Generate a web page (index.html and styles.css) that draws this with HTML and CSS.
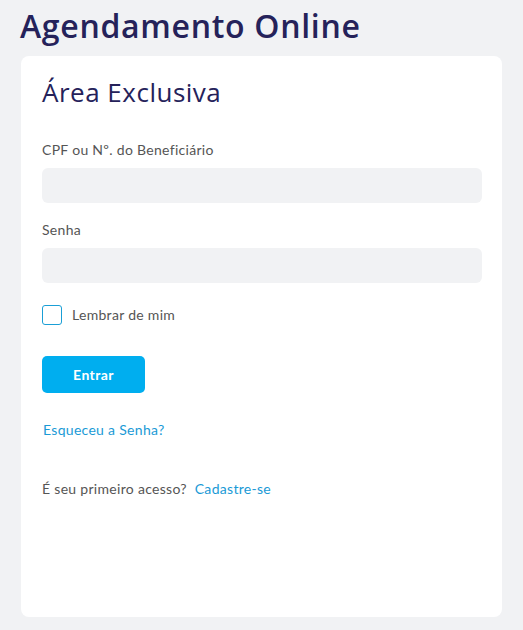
FILE: index.html
```html
<!DOCTYPE html>
<html>

<head>
    <title>Agendamento Online</title>
    <meta charset="UTF-8">
    <link rel="stylesheet" href="styles.css">
</head>

<body>
    <div class="page">
        <h1>Agendamento Online</h1>
        <div class="card">
            <h2>Área Exclusiva</h2>
            <form onsubmit="return false;">
                <label for="cpf">CPF ou Nº. do Beneficiário</label>
                <input type="text" id="cpf" name="cpf">
                <label for="senha">Senha</label>
                <input type="password" id="senha" name="senha">
                <label class="remember">
                    <input type="checkbox" name="lembrar">
                    <span>Lembrar de mim</span>
                </label>
                <button type="submit" class="btn">Entrar</button>
            </form>
            <a href="#" class="forgot">Esqueceu a Senha?</a>
            <p class="first">É seu primeiro acesso? <a href="#">Cadastre-se</a></p>
        </div>
    </div>
</body>

</html>
```

FILE: styles.css
```css
body {
    font-family: Lato, "Noto Sans", sans-serif;
    margin: 0;
    padding: 0;
    background-color: #f1f2f4;
    color: #555555;
    letter-spacing: 0.3px;
}

.page {
    padding: 6px 21px 13px 21px;
}

h1 {
    font-family: "Open Sans", sans-serif;
    font-size: 32px;
    font-weight: 600;
    letter-spacing: 0.7px;
    color: #25225a;
    margin: 0 0 10px -1px;
    line-height: 40px;
}

.card {
    background-color: #ffffff;
    border-radius: 8px;
    height: 561px;
    box-sizing: border-box;
    padding: 18px 20px 0 21px;
}

h2 {
    font-family: "Open Sans", sans-serif;
    font-size: 26px;
    font-weight: 400;
    letter-spacing: 0.5px;
    color: #25225a;
    margin: 0 0 31px 0;
    line-height: 36px;
}

form {
    display: flex;
    flex-direction: column;
    align-items: flex-start;
}

label {
    font-size: 14px;
    line-height: 18px;
    margin-bottom: 9px;
}

input[type="text"],
input[type="password"] {
    width: 100%;
    height: 35px;
    box-sizing: border-box;
    border: none;
    border-radius: 6px;
    background-color: #f1f2f4;
    margin-bottom: 18px;
}

.remember {
    display: flex;
    align-items: center;
    margin: 4px 0 31px 0;
}

.remember input {
    appearance: none;
    width: 20px;
    height: 20px;
    margin: 0 10px 0 0;
    border: 1px solid #1a9fd6;
    border-radius: 3px;
    background: #ffffff;
}

.btn {
    width: 103px;
    height: 37px;
    border: none;
    border-radius: 5px;
    background-color: #00aeef;
    color: #ffffff;
    font-family: inherit;
    font-size: 14px;
    font-weight: 700;
    letter-spacing: 0.4px;
    cursor: pointer;
}

a {
    color: #1a9ad6;
    text-decoration: none;
}

.forgot {
    display: block;
    font-size: 14px;
    line-height: 18px;
    margin: 28px 0 0 1px;
}

.first {
    font-size: 14px;
    line-height: 18px;
    margin: 41px 0 0 0;
}

.first a {
    margin-left: 4px;
}
```
